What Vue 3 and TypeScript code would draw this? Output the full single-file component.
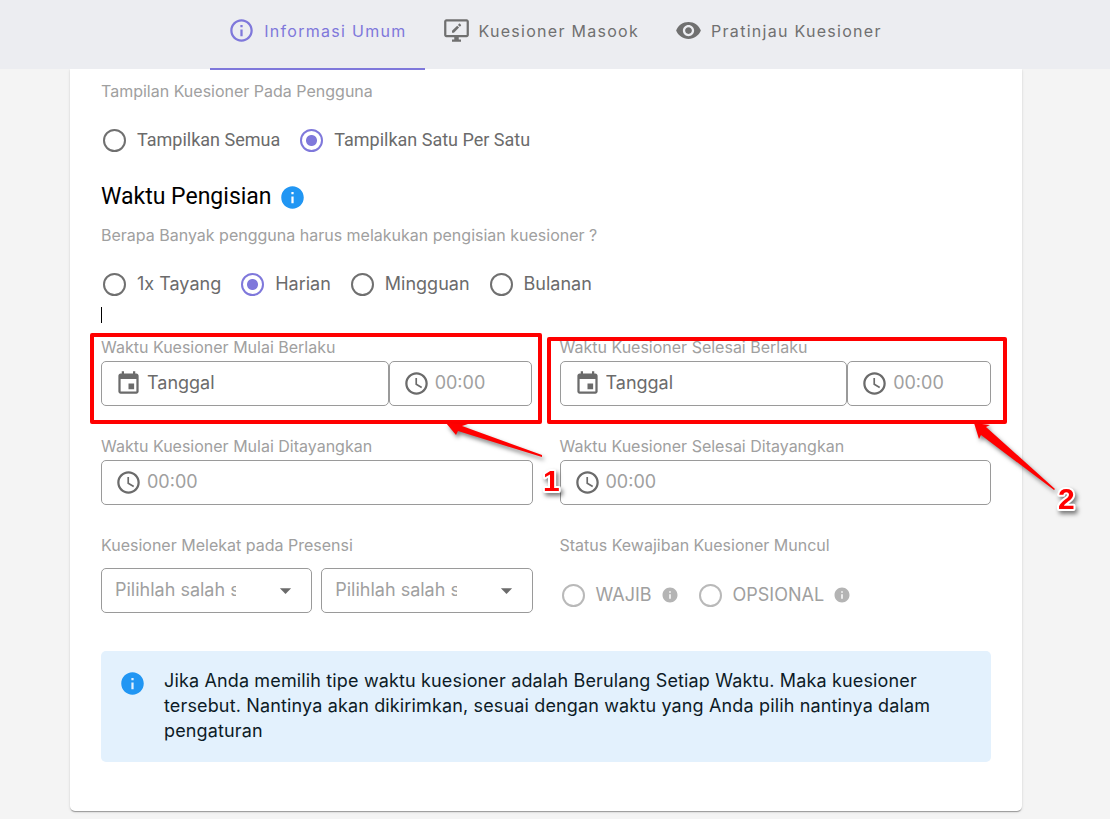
<script setup lang="ts">
import { ref } from 'vue'

interface Option {
  value: string
  label: string
}

const tabs = ['Informasi Umum', 'Kuesioner Masook', 'Pratinjau Kuesioner']
const activeTab = ref(0)

const displayModes: Option[] = [
  { value: 'all', label: 'Tampilkan Semua' },
  { value: 'single', label: 'Tampilkan Satu Per Satu' },
]
const displayMode = ref('single')

const frequencies: Option[] = [
  { value: 'once', label: '1x Tayang' },
  { value: 'daily', label: 'Harian' },
  { value: 'weekly', label: 'Mingguan' },
  { value: 'monthly', label: 'Bulanan' },
]
const frequency = ref('daily')

const obligations: Option[] = [
  { value: 'required', label: 'WAJIB' },
  { value: 'optional', label: 'OPSIONAL' },
]

const periods = [
  { id: 'start', label: 'Waktu Kuesioner Mulai Berlaku' },
  { id: 'end', label: 'Waktu Kuesioner Selesai Berlaku' },
]
const showings = [
  { id: 'show-start', label: 'Waktu Kuesioner Mulai Ditayangkan' },
  { id: 'show-end', label: 'Waktu Kuesioner Selesai Ditayangkan' },
]

const infoPath =
  'M12 2C6.48 2 2 6.48 2 12s4.48 10 10 10 10-4.48 10-10S17.52 2 12 2zm1 15h-2v-6h2v6zm0-8h-2V7h2v2z'
const clockPath =
  'M11.99 2C6.47 2 2 6.48 2 12s4.47 10 9.99 10C17.52 22 22 17.52 22 12S17.52 2 11.99 2zM12 20c-4.42 0-8-3.58-8-8s3.58-8 8-8 8 3.58 8 8-3.58 8-8 8zm.5-13H11v6l5.25 3.15.75-1.23-4.5-2.67z'
const calendarPath =
  'M17 12h-5v5h5v-5zM16 1v2H8V1H6v2H5c-1.11 0-1.99.9-1.99 2L3 19c0 1.1.89 2 2 2h14c1.1 0 2-.9 2-2V5c0-1.1-.9-2-2-2h-1V1h-2zm3 18H5V8h14v11z'
</script>

<template>
  <div class="page">
    <header class="topbar">
      <nav class="tabs" role="tablist">
        <button
          v-for="(tab, i) in tabs"
          :key="tab"
          type="button"
          role="tab"
          class="tab"
          :class="{ active: activeTab === i }"
          :aria-selected="activeTab === i"
          @click="activeTab = i"
        >
          <svg v-if="i === 0" class="icon" viewBox="0 0 24 24">
            <path
              d="M11 7h2v2h-2zm0 4h2v6h-2zm1-9C6.48 2 2 6.48 2 12s4.48 10 10 10 10-4.48 10-10S17.52 2 12 2zm0 18c-4.41 0-8-3.59-8-8s3.59-8 8-8 8 3.59 8 8-3.59 8-8 8z"
            />
          </svg>
          <svg v-else-if="i === 1" class="icon" viewBox="0 0 24 24">
            <path
              fill-rule="evenodd"
              d="M3 2h18c1.1 0 2 .9 2 2v12c0 1.1-.9 2-2 2h-7v2h2v2H8v-2h2v-2H3c-1.1 0-2-.9-2-2V4c0-1.1.9-2 2-2zm0 2v12h18V4H3z"
            />
            <path d="M8 12.3V14h1.7l4.6-4.6-1.7-1.7zM13.3 7l1.7 1.7.9-.9c.3-.3.3-.6 0-.9l-.8-.8c-.3-.3-.6-.3-.9 0z" />
          </svg>
          <svg v-else class="icon" viewBox="0 0 24 24">
            <path
              d="M12 4.5C7 4.5 2.73 7.61 1 12c1.73 4.39 6 7.5 11 7.5s9.27-3.11 11-7.5c-1.73-4.39-6-7.5-11-7.5zM12 17c-2.76 0-5-2.24-5-5s2.24-5 5-5 5 2.24 5 5-2.24 5-5 5zm0-8c-1.66 0-3 1.34-3 3s1.34 3 3 3 3-1.34 3-3-1.34-3-3-3z"
            />
          </svg>
          <span>{{ tab }}</span>
        </button>
      </nav>
    </header>

    <main class="content">
      <form class="card" @submit.prevent>
        <fieldset class="group">
          <legend class="caption">Tampilan Kuesioner Pada Pengguna</legend>
          <div class="radios roboto">
            <label v-for="o in displayModes" :key="o.value" class="radio">
              <input v-model="displayMode" type="radio" name="display" :value="o.value" />
              <span>{{ o.label }}</span>
            </label>
          </div>
        </fieldset>

        <h2 class="heading">
          Waktu Pengisian
          <svg class="icon blue" viewBox="0 0 24 24"><path :d="infoPath" /></svg>
        </h2>

        <fieldset class="group">
          <legend class="caption">Berapa Banyak pengguna harus melakukan pengisian kuesioner ?</legend>
          <div class="radios">
            <label v-for="o in frequencies" :key="o.value" class="radio">
              <input v-model="frequency" type="radio" name="frequency" :value="o.value" />
              <span>{{ o.label }}</span>
            </label>
          </div>
        </fieldset>

        <div class="caret-line"><span class="caret"></span></div>

        <div class="grid">
          <div v-for="(p, i) in periods" :key="p.id" class="field">
            <label class="caption" :for="p.id + '-date'">{{ p.label }}</label>
            <div class="date-time">
              <div class="box">
                <svg class="icon" viewBox="0 0 24 24"><path :d="calendarPath" /></svg>
                <input :id="p.id + '-date'" class="date" type="text" placeholder="Tanggal" />
              </div>
              <div class="box">
                <svg class="icon" viewBox="0 0 24 24"><path :d="clockPath" /></svg>
                <input type="text" placeholder="00:00" :aria-label="p.label + ' 00:00'" />
              </div>
            </div>
            <div class="callout" :class="i === 0 ? 'first' : 'second'">
              <svg v-if="i === 0" class="arrow" width="120" height="90" viewBox="0 0 120 90">
                <polygon points="4,0 26,1 20,3 100,32 100,34 16,8 14,12" />
                <text x="101" y="68">1</text>
              </svg>
              <svg v-else class="arrow" width="120" height="110" viewBox="0 0 120 110">
                <polygon points="7,0 23,2 19,4 88,66 87,67 14,12 12,16" />
                <text x="91" y="86">2</text>
              </svg>
            </div>
          </div>

          <div v-for="s in showings" :key="s.id" class="field">
            <label class="caption" :for="s.id">{{ s.label }}</label>
            <div class="box">
              <svg class="icon" viewBox="0 0 24 24"><path :d="clockPath" /></svg>
              <input :id="s.id" type="text" placeholder="00:00" />
            </div>
          </div>

          <div class="field">
            <label class="caption" for="presence-1">Kuesioner Melekat pada Presensi</label>
            <div class="selects">
              <div v-for="n in 2" :key="n" class="select">
                <select :id="'presence-' + n" aria-label="Kuesioner Melekat pada Presensi">
                  <option>Pilihlah salah satu</option>
                </select>
                <svg class="icon drop" viewBox="0 0 24 24"><path d="M7 10l5 5 5-5z" /></svg>
              </div>
            </div>
          </div>

          <fieldset class="group field">
            <legend class="caption">Status Kewajiban Kuesioner Muncul</legend>
            <div class="radios disabled">
              <label v-for="o in obligations" :key="o.value" class="radio">
                <input type="radio" name="obligation" :value="o.value" disabled />
                <span>{{ o.label }}</span>
                <svg class="small-icon" viewBox="0 0 24 24"><path :d="infoPath" /></svg>
              </label>
            </div>
          </fieldset>
        </div>

        <div class="alert" role="note">
          <svg class="icon blue" viewBox="0 0 24 24"><path :d="infoPath" /></svg>
          <p>
            Jika Anda memilih tipe waktu kuesioner adalah Berulang Setiap Waktu. Maka kuesioner
            tersebut. Nantinya akan dikirimkan, sesuai dengan waktu yang Anda pilih nantinya dalam
            pengaturan
          </p>
        </div>
      </form>
    </main>
  </div>
</template>

<style>
body {
  margin: 0;
  background: #f4f4f4;
}
</style>

<style scoped>
.page {
  min-height: 100vh;
  font-family: Inter, 'Liberation Sans', sans-serif;
  font-size: 18px;
  color: #6b6b6b;
}
.page *,
.page *::before {
  box-sizing: border-box;
}
.topbar {
  position: relative;
  z-index: 1;
  background: #ecedf1;
}
.tabs {
  display: flex;
  justify-content: center;
  height: 69px;
}
.tab {
  position: relative;
  display: flex;
  align-items: center;
  gap: 9px;
  padding: 0 18px 8px;
  border: 0;
  background: none;
  color: #707070;
  font: inherit;
  font-size: 16px;
  letter-spacing: 0.08em;
  white-space: nowrap;
}
.tab.active {
  color: #7f78db;
}
.tab.active::before {
  content: '';
  position: absolute;
  left: 0;
  right: 0;
  bottom: -1px;
  height: 2px;
  background: #7f78db;
}
.icon {
  flex: none;
  width: 27px;
  height: 27px;
  fill: currentColor;
}
.blue {
  color: #2196f3;
}
.content {
  padding: 0 88px 8px 70px;
}
.card {
  padding: 9px 31px 49px;
  border-radius: 0 0 5px 5px;
  background: #fff;
  box-shadow:
    0 2px 1px -1px rgba(0, 0, 0, 0.2),
    0 1px 1px rgba(0, 0, 0, 0.14),
    0 1px 3px rgba(0, 0, 0, 0.12);
}
.group {
  min-width: 0;
  margin: 0;
  padding: 0;
  border: 0;
}
.caption {
  display: block;
  padding: 0;
  font-size: 16px;
  line-height: 27px;
  color: #a0a0a0;
}
.radios {
  display: flex;
  gap: 20px;
  margin-top: 21px;
  padding: 0 0 1px 2px;
}
.roboto {
  font-family: Roboto, sans-serif;
}
.radio {
  display: flex;
  align-items: center;
  gap: 11px;
  line-height: 27px;
}
.radio input {
  appearance: none;
  flex: none;
  width: 23px;
  height: 23px;
  margin: 1px 0 0;
  border: 2px solid #707070;
  border-radius: 50%;
}
.radio input:checked {
  border-color: #7f78db;
  background: radial-gradient(circle, #7f78db 5px, transparent 6px);
}
.heading {
  display: flex;
  align-items: center;
  gap: 7px;
  margin: 25px 0 7px;
  font-family: Roboto, sans-serif;
  font-size: 23px;
  font-weight: 400;
  line-height: 36px;
  color: #000;
}
.caret-line {
  height: 36px;
  padding-top: 9px;
}
.caret {
  display: block;
  width: 1px;
  height: 16px;
  background: #000;
}
.grid {
  display: grid;
  grid-template-columns: 1fr 1fr;
  gap: 27px;
}
.field {
  position: relative;
  min-width: 0;
}
.date-time {
  display: grid;
  grid-template-columns: minmax(0, 2fr) minmax(0, 1fr);
}
.box {
  display: flex;
  align-items: center;
  gap: 5px;
  min-width: 0;
  height: 45px;
  padding: 0 13px;
  border: 1px solid #9a9a9a;
  border-radius: 5px;
}
.box input {
  flex: 1;
  min-width: 0;
  padding: 0 0 2px;
  border: 0;
  outline: 0;
  background: none;
  font: inherit;
  color: #6b6b6b;
}
.box input::placeholder {
  color: #a0a0a0;
  opacity: 1;
}
.box .date::placeholder {
  color: #6b6b6b;
}
.selects {
  display: grid;
  grid-template-columns: 1fr 1fr;
  gap: 9px;
  margin-top: 9px;
}
.select {
  position: relative;
}
.select select {
  appearance: none;
  width: 100%;
  height: 45px;
  padding: 0 75px 2px 13px;
  border: 1px solid #9a9a9a;
  border-radius: 5px;
  background: #fff;
  font: inherit;
  color: #a0a0a0;
}
.drop {
  position: absolute;
  right: 13px;
  top: 9px;
  pointer-events: none;
}
.disabled {
  margin-top: 22px;
  color: #a0a0a0;
}
.disabled input {
  border-color: #b9b9b9;
}
.small-icon {
  width: 18px;
  height: 18px;
  margin-left: -2px;
  fill: #b4b4b4;
}
.alert {
  display: flex;
  gap: 18px;
  margin-top: 38px;
  padding: 17px 18px 19px;
  border-radius: 5px;
  background: #e3f1fd;
  color: #0d1b26;
}
.alert .icon {
  margin-top: 2px;
}
.alert p {
  margin: 0;
  line-height: 25px;
  letter-spacing: 0.008em;
}
.callout {
  position: absolute;
  z-index: 1;
  border: 4px solid #f00;
  border-radius: 2px;
  pointer-events: none;
}
.first {
  inset: -1px -9px -18px -11px;
}
.second {
  inset: 3px -16px -18px -13px;
}
.arrow {
  position: absolute;
  top: 100%;
  margin-top: 3px;
  overflow: visible;
  fill: #f00;
  filter: drop-shadow(2px 3px 2px rgba(0, 0, 0, 0.5));
}
.first .arrow {
  right: -24px;
}
.second .arrow {
  right: -84px;
}
.arrow text {
  font-family: 'Liberation Sans', Arial, sans-serif;
  font-size: 30px;
  font-weight: 700;
  stroke: #fff;
  stroke-width: 4px;
  stroke-linejoin: round;
  paint-order: stroke;
}
</style>
